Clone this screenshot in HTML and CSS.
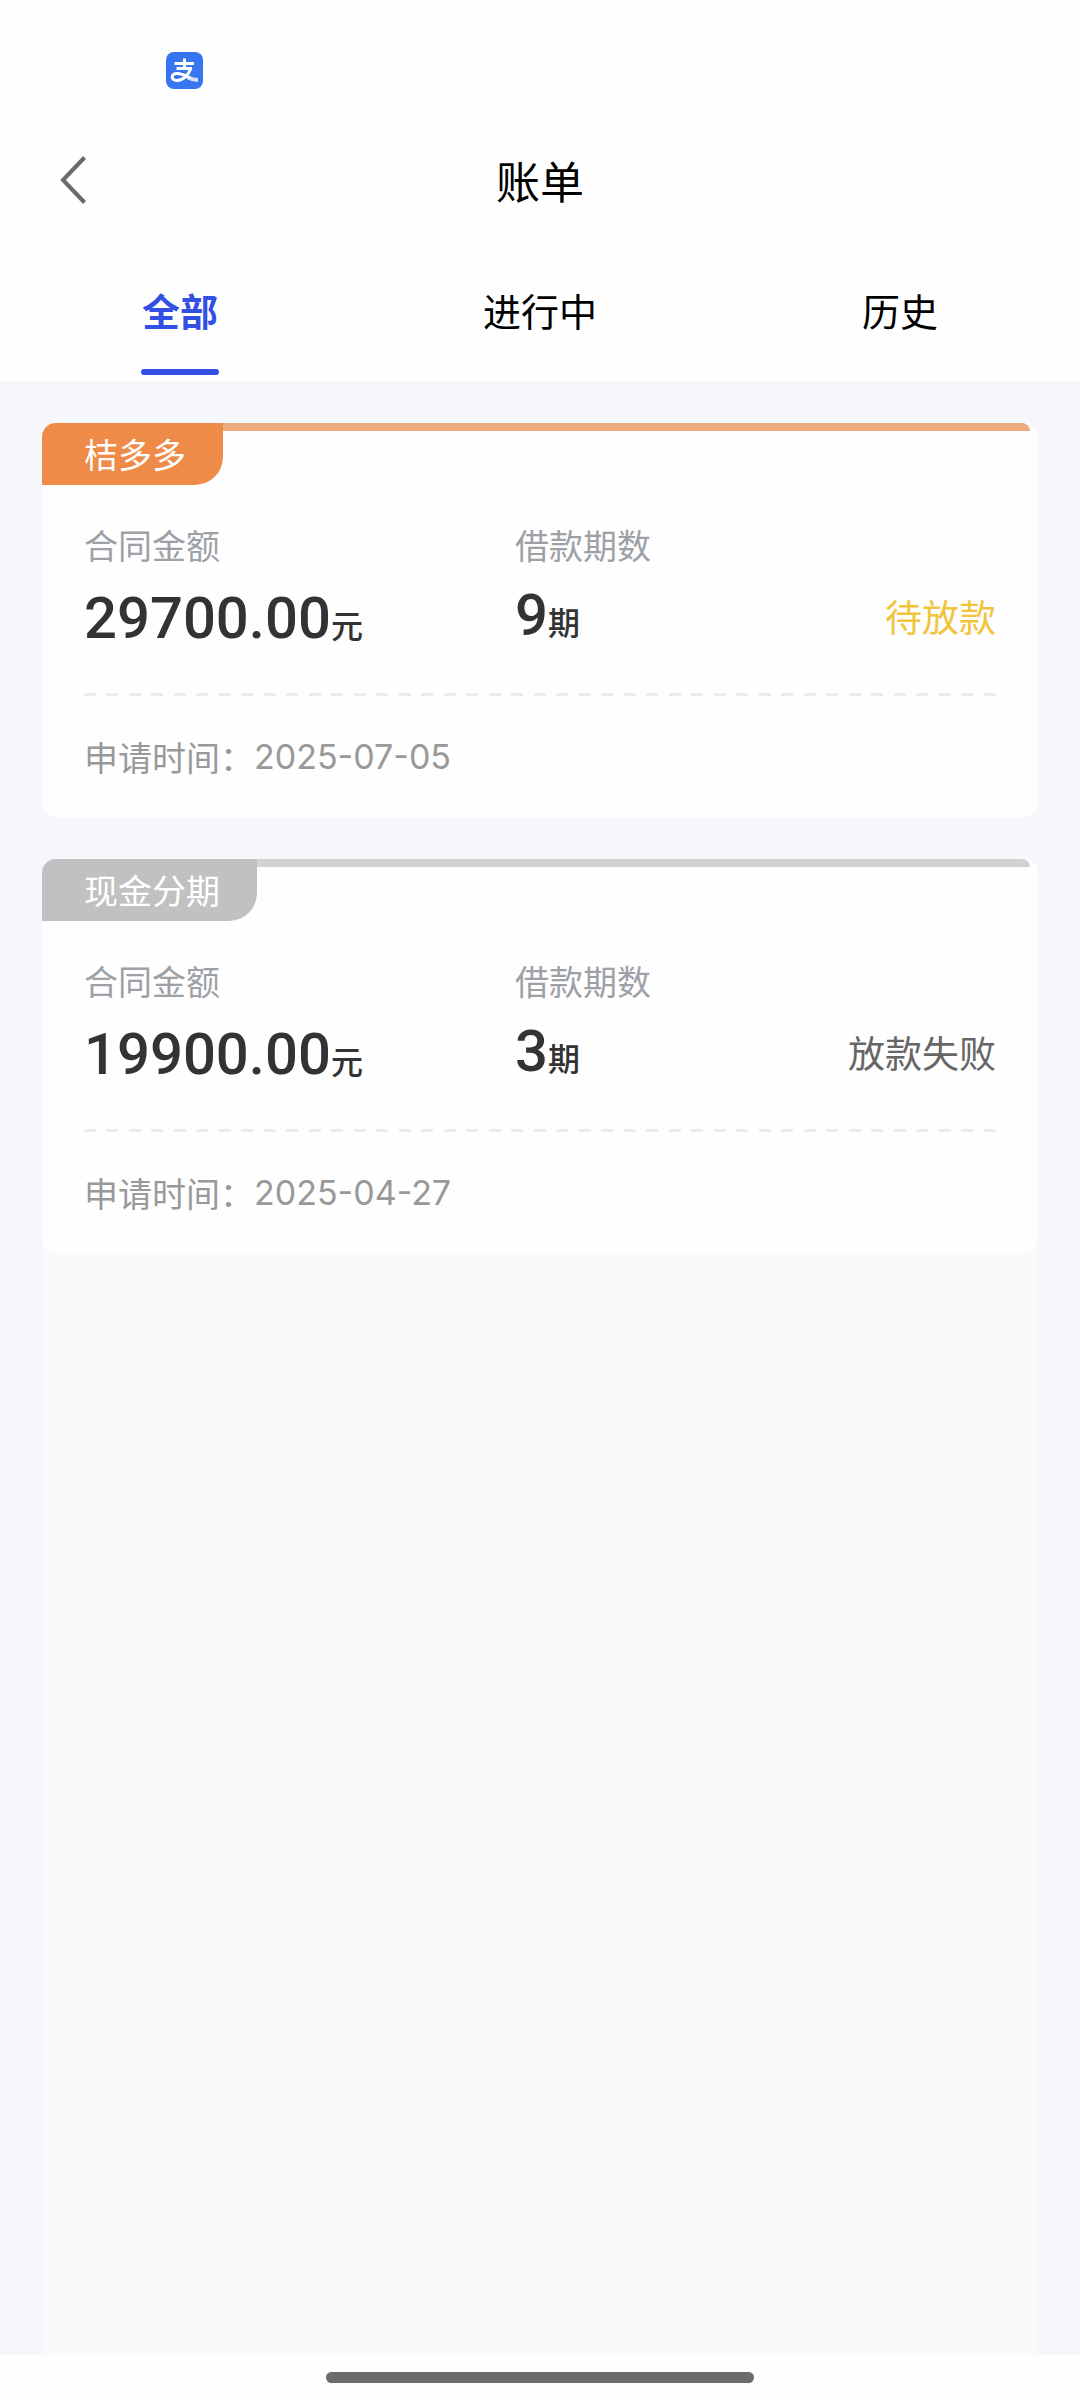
FILE: index.html
```html
<!DOCTYPE html>
<html lang="zh-CN">
<head>
<meta charset="utf-8">
<meta name="viewport" content="width=device-width, initial-scale=1">
<title>账单</title>
<link rel="stylesheet" href="styles.css">
</head>
<body>
<div class="status-bar">
  <svg class="app-icon" viewBox="0 0 37 37" aria-hidden="true">
    <rect width="37" height="37" rx="8" fill="#3875f0"/>
    <g fill="none" stroke="#fff">
      <path stroke-width="3" d="M8.500 11.500H28M18.500 6.500V16M10.500 16.500H26"/>
      <path stroke-width="3" d="M25 16C22.500 23 17 28.500 11 28.500C4.500 28.500 4.500 21.500 11.500 21.500C16 21.500 20 24 24 26"/>
      <path stroke-width="4" stroke-opacity=".8" d="M22 25.500C25 27 28 28 32 28"/>
    </g>
  </svg>
</div>
<header class="nav">
  <button class="back" type="button" aria-label="返回">
    <svg class="back-icon" viewBox="0 0 26 48" aria-hidden="true"><path d="M24.500 1.500L3 24L24.500 46.500" fill="none" stroke="#6a6a6a" stroke-width="4"/></svg>
  </button>
  <h1 class="title">账单</h1>
</header>
<nav class="tabs">
  <button class="tab tab-active" type="button">全部</button>
  <button class="tab" type="button">进行中</button>
  <button class="tab" type="button">历史</button>
</nav>
<main class="content">
  <article class="card">
    <div class="card-top"><h2 class="tag">桔多多</h2><span class="strip"></span></div>
    <div class="card-body">
      <div class="summary">
        <div class="amount"><span class="label">合同金额</span><span class="value">29700.00<span class="unit">元</span></span></div>
        <div class="term"><span class="label">借款期数</span><span class="value">9<span class="unit">期</span></span></div>
        <span class="state state-pending">待放款</span>
      </div>
      <p class="applied">申请时间：<time class="date" datetime="2025-07-05">2025-07-05</time></p>
    </div>
  </article>
  <article class="card card-failed">
    <div class="card-top"><h2 class="tag">现金分期</h2><span class="strip"></span></div>
    <div class="card-body">
      <div class="summary">
        <div class="amount"><span class="label">合同金额</span><span class="value">19900.00<span class="unit">元</span></span></div>
        <div class="term"><span class="label">借款期数</span><span class="value">3<span class="unit">期</span></span></div>
        <span class="state">放款失败</span>
      </div>
      <p class="applied">申请时间：<time class="date" datetime="2025-04-27">2025-04-27</time></p>
    </div>
  </article>
  <div class="rest"></div>
</main>
<footer class="home-area"><span class="home-bar"></span></footer>
</body>
</html>
```
FILE: styles.css
```css
* { box-sizing: border-box; }
body {
  margin: 0;
  min-height: 100vh;
  display: flex;
  flex-direction: column;
  background: #fefefe;
  color: #000;
  font-family: "Noto Sans CJK SC", sans-serif;
}
h1, h2, p { margin: 0; font-weight: 400; }
button { border: 0; padding: 0; background: none; color: inherit; font: inherit; }

.status-bar { height: 140px; padding: 52px 166px 0; }
.app-icon { display: block; width: 37px; height: 37px; }

.nav { display: grid; grid-template-columns: 1fr auto 1fr; align-items: center; height: 80px; padding: 0 60px; }
.back { justify-self: start; }
.back-icon { display: block; width: 26px; height: 48px; }
.title { font-size: 44px; line-height: 64px; }

.tabs { display: grid; grid-template-columns: repeat(3, 1fr); padding: 62px 0 6px; }
.tab {
  display: flex;
  flex-direction: column;
  align-items: center;
  gap: 31px;
  font-size: 38px;
  line-height: 56px;
}
.tab::after { content: ""; width: 78px; height: 6px; border-radius: 3px; }
.tab-active { color: #3350e4; font-weight: 700; }
.tab-active::after { background: #3350e4; }

.content { flex: 1; display: flex; flex-direction: column; gap: 42px; padding: 42px 42px 0; background: #f5f7fc; }
.card { background: #fefefe; border-radius: 14px; overflow: hidden; }
.card-top { display: flex; padding-right: 8px; }
.tag {
  padding: 0 37px 0 42px;
  border-radius: 0 0 28px 0;
  background: #ef8b48;
  color: #fff;
  font-size: 34px;
  line-height: 62px;
}
.strip { flex: 1; height: 8px; border-radius: 0 8px 0 0; background: #ebab7c; }
.card-failed .tag { background: #c1c1c1; }
.card-failed .strip { background: #d2d2d2; }

.card-body { padding: 32px 42px 0; }
.summary {
  display: grid;
  grid-template-columns: 431px auto 1fr;
  height: 179px;
  background: repeating-linear-gradient(90deg, #ececec 0 12px, transparent 12px 22px, #ececec 22px 34px, transparent 34px 45px) bottom / 100% 3px no-repeat;
}
.amount, .term { display: flex; flex-direction: column; }
.label { color: #9da1a6; font-size: 34px; line-height: 56px; }
.value { color: #333; font-family: Roboto, "Noto Sans CJK SC", sans-serif; font-size: 58px; font-weight: 500; line-height: 90px; }
.term .value { line-height: 84px; }
.unit { font-family: "Noto Sans CJK SC", sans-serif; font-size: 32px; line-height: 32px; }
.state { justify-self: end; padding-top: 71px; color: #666; font-size: 37px; line-height: 56px; }
.state-pending { color: #f0c53c; }
.applied { display: flex; padding: 33px 0; color: #999; font-size: 34px; line-height: 55px; }
.date { font-family: Inter, "Noto Sans CJK SC", sans-serif; }

.rest { flex: 1; margin-top: -42px; background: #fafafa; }
.home-area { display: flex; justify-content: center; height: 45px; padding-top: 17px; }
.home-bar { width: 428px; height: 11px; border-radius: 6px; background: #6b6b6b; }
```
